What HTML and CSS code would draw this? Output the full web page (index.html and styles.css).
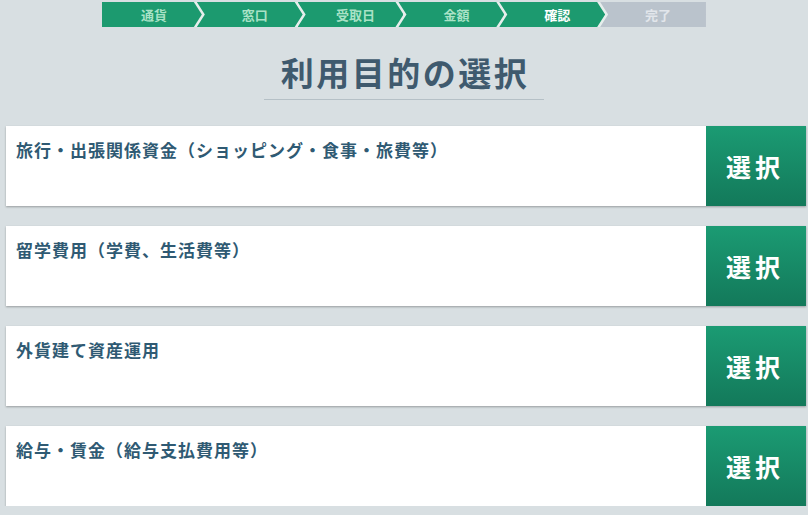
FILE: index.html
```html
<!DOCTYPE html>
<html lang="ja">
<head>
    <meta charset="UTF-8">
    <title>利用目的の選択</title>
    <link rel="stylesheet" href="styles.css">
</head>
<body>
    <ol class="steps">
        <li class="step done">通貨</li>
        <li class="step done">窓口</li>
        <li class="step done">受取日</li>
        <li class="step done">金額</li>
        <li class="step current">確認</li>
        <li class="step todo">完了</li>
    </ol>

    <div class="heading">
        <h1>利用目的の選択</h1>
    </div>

    <div class="purpose-list">
        <div class="purpose">
            <div class="purpose-label">旅行・出張関係資金（ショッピング・食事・旅費等）</div>
            <button class="select-button">選択</button>
        </div>
        <div class="purpose">
            <div class="purpose-label">留学費用（学費、生活費等）</div>
            <button class="select-button">選択</button>
        </div>
        <div class="purpose">
            <div class="purpose-label">外貨建て資産運用</div>
            <button class="select-button">選択</button>
        </div>
        <div class="purpose">
            <div class="purpose-label">給与・賃金（給与支払費用等）</div>
            <button class="select-button">選択</button>
        </div>
    </div>
</body>
</html>
```

FILE: styles.css
```css
body {
    font-family: "Noto Sans CJK JP", "Noto Sans", sans-serif;
    background-color: #d8dfe2;
    margin: 0;
}

.steps {
    display: flex;
    width: 604px;
    height: 25px;
    margin: 2px auto 0;
    padding: 0;
    list-style: none;
    background-color: #e6eeec;
}

.step {
    flex: 1;
    display: flex;
    align-items: center;
    justify-content: center;
    margin-left: -5px;
    padding-left: 10px;
    font-size: 13px;
    font-weight: bold;
    clip-path: polygon(0 0, calc(100% - 8px) 0, 100% 50%, calc(100% - 8px) 100%, 0 100%, 8px 50%);
}

.step:first-child {
    margin-left: 0;
    padding-left: 4px;
    clip-path: polygon(0 0, calc(100% - 8px) 0, 100% 50%, calc(100% - 8px) 100%, 0 100%);
}

.step:last-child {
    clip-path: polygon(0 0, 100% 0, 100% 100%, 0 100%, 8px 50%);
}

.step.done { background-color: #1c9a6f; color: #a9e2c6; }
.step.current { background-color: #1c9a6f; color: #ffffff; }
.step.todo { background-color: #bac3cc; color: #e2e6eb; }

.heading {
    text-align: center;
}

.heading h1 {
    display: inline-block;
    margin: 24px 0 0;
    padding: 0 15px 5px 17px;
    font-size: 33px;
    line-height: 43px;
    letter-spacing: 2.5px;
    color: #3f5a6e;
    border-bottom: 1px solid #b5c0c6;
}

.purpose-list {
    display: flex;
    flex-direction: column;
    gap: 20px;
    width: 800px;
    margin: 26px 0 0 6px;
}

.purpose {
    display: flex;
    height: 80px;
    background-color: #ffffff;
    box-shadow: 0 1px 2px rgba(0, 0, 0, 0.3);
}

.purpose-label {
    flex: 1;
    padding: 12px 10px 0;
    font-size: 17px;
    line-height: 24px;
    font-weight: bold;
    letter-spacing: 1px;
    color: #2f5a73;
}

.select-button {
    width: 100px;
    border: none;
    background: linear-gradient(to bottom, #1b9b73, #13795a);
    color: #ffffff;
    font-family: inherit;
    font-size: 25px;
    font-weight: bold;
    letter-spacing: 4px;
    padding-left: 4px;
    cursor: pointer;
}
```
